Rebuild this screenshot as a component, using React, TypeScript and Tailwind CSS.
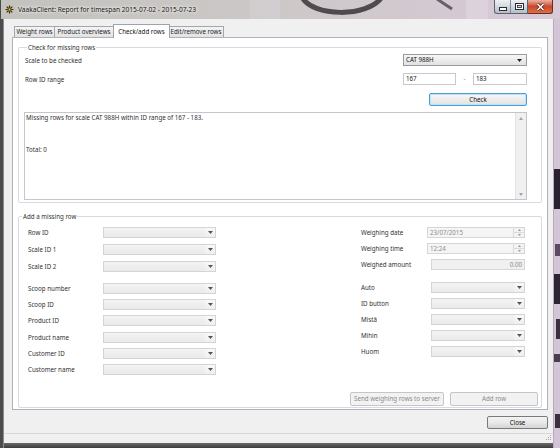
import React from "react";

const font = "font-['Noto_Sans',sans-serif]";

function Arrow({ c = "#444" }: { c?: string }) {
  return (
    <svg width="5" height="3" viewBox="0 0 5 3" className="shrink-0">
      <path d="M0 0H5L2.5 3Z" fill={c} />
    </svg>
  );
}

function DCombo({ cls }: { cls: string }) {
  return (
    <div className={`flex h-[11px] items-stretch border border-[#d4d4d4] ${cls}`}>
      <div className="flex-1 bg-linear-to-b from-[#f3f3f3] to-[#eaeaea]" />
      <div className="flex w-[10px] items-center justify-center bg-linear-to-b from-[#f8f8f8] to-[#efefef]">
        <Arrow c="#555" />
      </div>
    </div>
  );
}

function Label({ children, cls = "" }: { children: React.ReactNode; cls?: string }) {
  return <div className={`text-[6.2px] leading-[11px] text-[#303030] ${cls}`}>{children}</div>;
}

function Spin() {
  return (
    <div className="flex w-[11px] flex-col border-l border-[#dcdcdc] bg-[#f3f3f3]">
      <div className="flex flex-1 items-center justify-center border-b border-[#dcdcdc]">
        <svg width="3" height="2" viewBox="0 0 3 2"><path d="M0 2H3L1.5 0Z" fill="#9a9a9a" /></svg>
      </div>
      <div className="flex flex-1 items-center justify-center">
        <svg width="3" height="2" viewBox="0 0 3 2"><path d="M0 0H3L1.5 2Z" fill="#9a9a9a" /></svg>
      </div>
    </div>
  );
}

function DatePick({ text }: { text: string }) {
  return (
    <div className="flex h-[11px] w-[98px] border border-[#d6d6d6] bg-[#f5f5f5]">
      <div className="flex-1 pl-[2px] text-[6.2px] leading-[9px] text-[#8c8c8c]">{text}</div>
      <Spin />
    </div>
  );
}

function Tab({ cls, children, sel = false }: { cls: string; children: React.ReactNode; sel?: boolean }) {
  return sel ? (
    <div
      className={`relative z-10 -mb-px flex h-[14px] items-center justify-center border border-b-0 border-[#9ea3aa] bg-white text-[6.2px] text-[#111] ${cls}`}
    >
      {children}
    </div>
  ) : (
    <div
      className={`flex h-[11px] items-center justify-center border border-b-0 border-[#a3a7ad] bg-linear-to-b from-[#f4f4f4] to-[#e2e2e2] text-[6.2px] text-[#222] ${cls}`}
    >
      {children}
    </div>
  );
}

function TitleBar() {
  return (
    <div className="relative flex h-[19px] bg-linear-to-r from-[#c3c2bc] via-[#cdc8c8] to-[#d8cad9]">
      <svg className="absolute left-0 top-0" width="560" height="19" viewBox="0 0 560 19">
        <path d="M302 -3 C 312 17, 368 18, 382 -3" stroke="#2e2a30" strokeWidth="5" fill="none" opacity="0.8" />
        <path d="M437 -1 L 452 9" stroke="#3a3340" strokeWidth="3" opacity="0.7" />
        <rect x="466" y="0" width="22" height="19" fill="#e4dbe6" opacity="0.5" />
        <rect x="250" y="0" width="30" height="19" fill="#ddd6df" opacity="0.35" />
        <rect x="0" y="0" width="1" height="19" fill="#4b4b4b" />
      </svg>
      <div className="relative flex h-[19px] items-center pl-[5px]">
        <svg width="9" height="9" viewBox="0 0 9 9" className="mr-[4px]">
          <g stroke="#3a2a12" strokeWidth="1.2">
            <path d="M4.5 0.5V8.5M0.5 4.5H8.5M1.7 1.7L7.3 7.3M7.3 1.7L1.7 7.3" />
          </g>
          <circle cx="4.5" cy="4.5" r="2" fill="#6b4a14" />
          <circle cx="4.5" cy="4.5" r="0.9" fill="#e8c34a" />
        </svg>
        <span className="text-[6.6px] leading-[9px] text-[#161616] [text-shadow:0_0_3px_#fff,0_0_5px_#fff]">
          VaakaClient: Report for timespan 2015-07-02 - 2015-07-23
        </span>
      </div>
      <div className="flex-1" />
      <div className="relative mr-[7px] flex h-[14px]">
        <div className="flex w-[34px] rounded-bl-[3px] border border-t-0 border-[#59626e] bg-linear-to-b from-[#eef1f4] via-[#d2d9e0] to-[#b3bdc8]">
          <div className="flex w-[17px] items-center justify-center border-r border-[#7f8a96]">
            <svg width="8" height="4" viewBox="0 0 8 4" className="mt-[4px]">
              <rect x="0.5" y="0.5" width="7" height="3" fill="#fff" stroke="#2b2b2b" strokeWidth="1" />
            </svg>
          </div>
          <div className="flex w-[17px] items-center justify-center">
            <svg width="9" height="7" viewBox="0 0 9 7">
              <rect x="0.5" y="0.5" width="8" height="6" fill="none" stroke="#2b2b2b" strokeWidth="1" />
              <rect x="1.5" y="1.5" width="6" height="4" fill="none" stroke="#fff" strokeWidth="1" />
              <rect x="2.5" y="2.5" width="4" height="2" fill="none" stroke="#2b2b2b" strokeWidth="0.8" />
            </svg>
          </div>
        </div>
        <div className="flex w-[25px] items-center justify-center rounded-br-[3px] border border-l-0 border-t-0 border-[#6b2b1d] bg-linear-to-b from-[#eab0a3] via-[#c9472c] to-[#dc7048]">
          <svg width="9" height="8" viewBox="0 0 9 8">
            <path d="M1.5 1 L7.5 7 M7.5 1 L1.5 7" stroke="#5a1c10" strokeWidth="3" />
            <path d="M1.5 1 L7.5 7 M7.5 1 L1.5 7" stroke="#fff" strokeWidth="1.6" />
          </svg>
        </div>
      </div>
    </div>
  );
}

function RightGlass() {
  return (
    <svg width="7" height="429" viewBox="0 0 7 429" className="shrink-0">
      <rect x="0" y="0" width="7" height="429" fill="#d3c4d7" />
      <rect x="0" y="0" width="1" height="429" fill="#b9a9bd" />
      <rect x="1" y="150" width="6" height="40" fill="#2a2230" />
      <rect x="2" y="225" width="5" height="12" fill="#5b4a60" />
      <rect x="1" y="255" width="6" height="30" fill="#2d2432" />
      <rect x="3" y="300" width="4" height="20" fill="#3a2f3f" />
      <rect x="1" y="335" width="6" height="8" fill="#4a3d4f" />
      <rect x="2" y="395" width="5" height="14" fill="#3a2f3f" />
    </svg>
  );
}

export default function App() {
  return (
    <div className={`flex h-[448px] w-[560px] flex-col overflow-hidden bg-[#cdbfd1] ${font}`}>
      <TitleBar />
      <div className="flex h-[429px]">
        <div className="flex w-[4px] shrink-0">
          <div className="w-[3px] bg-[#4c4c4c]" />
          <div className="w-[1px] bg-[#8d8d8d]" />
        </div>
        <div className="flex w-[549px] flex-col">
          <div className="flex h-[424px] flex-col bg-[#f0f0f0]">
            <div className="flex h-[18px] items-end pl-[10px]">
              <Tab cls="w-[41px]">Weight rows</Tab>
              <Tab cls="-ml-px w-[60px]">Product overviews</Tab>
              <Tab cls="-ml-px w-[57px]" sel>
                Check/add rows
              </Tab>
              <Tab cls="-ml-[2px] w-[56px]">Edit/remove rows</Tab>
            </div>
            <div className="ml-[8px] flex h-[373px] w-[536px] flex-col border border-[#aeb2b8] bg-white">
              {/* group 1 */}
              <div className="ml-[5px] mt-[9px] flex h-[156px] w-[524px] flex-col rounded-[2px] border border-[#d5dbe0] pl-[5px] pr-[14px]">
                <div className="-mt-[5px] ml-[3px] w-fit bg-white px-[1px] text-[6.2px] leading-[9px] text-[#303030]">
                  Check for missing rows
                </div>
                <div className="mt-[2px] flex h-[12px] items-center justify-between">
                  <Label cls="pl-[1px] mt-[1px]">Scale to be checked</Label>
                  <div className="flex h-[12px] w-[124px] items-center border border-[#979a9e] bg-linear-to-b from-[#f7f7f7] to-[#e1e1e1] pl-[2px] pr-[4px]">
                    <span className="flex-1 text-[6.2px] leading-[10px] text-[#111]">CAT 988H</span>
                    <Arrow c="#222" />
                  </div>
                </div>
                <div className="mt-[7px] flex h-[12px] items-center">
                  <Label cls="pl-[1px] flex-1">Row ID range</Label>
                  <div className="h-[12px] w-[53px] border border-[#c6c9ce] bg-white pl-[2px] text-[6.2px] leading-[10px] text-[#222]">
                    167
                  </div>
                  <div className="w-[17px] text-center text-[6.2px] leading-[10px] text-[#888]">-</div>
                  <div className="h-[12px] w-[54px] border border-[#c6c9ce] bg-white pl-[2px] text-[6.2px] leading-[10px] text-[#222]">
                    183
                  </div>
                </div>
                <div className="mt-[8px] flex justify-end">
                  <div className="flex h-[13px] w-[98px] items-center justify-center rounded-[2px] border border-[#4a9fd6] bg-linear-to-b from-[#f8f8f8] to-[#e2e2e2] text-[6.2px] text-[#111] shadow-[inset_0_0_0_1px_#bfe2f6]">
                    Check
                  </div>
                </div>
                <div className="mt-[6px] flex h-[88px] border border-[#c3c7cc] bg-white">
                  <div className="flex-1 pl-[1px] text-[6.2px] leading-[8px] text-[#303030]">
                    <div className="mt-[1px]">Missing rows for scale CAT 988H within ID range of 167 - 183.</div>
                    <div className="mt-[24px]">Total: 0</div>
                  </div>
                  <div className="flex w-[11px] flex-col justify-between border-l border-[#e3e3e3] bg-[#f0f0f0]">
                    <div className="flex h-[10px] items-center justify-center">
                      <svg width="4" height="3" viewBox="0 0 4 3"><path d="M0 3H4L2 0Z" fill="#a3a3a3" /></svg>
                    </div>
                    <div className="flex h-[10px] items-center justify-center">
                      <svg width="4" height="3" viewBox="0 0 4 3"><path d="M0 0H4L2 3Z" fill="#a3a3a3" /></svg>
                    </div>
                  </div>
                </div>
              </div>
              {/* group 2 */}
              <div className="ml-[5px] mt-[13px] flex h-[192px] w-[524px] flex-col rounded-[2px] border border-[#d5dbe0] pl-[9px]">
                <div className="-ml-[6px] -mt-[5px] w-fit bg-white px-[1px] text-[6.2px] leading-[9px] text-[#303030]">
                  Add a missing row
                </div>
                <div className="mt-[6px] flex">
                  <div className="flex w-[188px] flex-col">
                    <div className="flex h-[11px] items-center">
                      <Label cls="w-[75px]">Row ID</Label>
                      <DCombo cls="w-[113px]" />
                    </div>
                    <div className="mt-[6px] flex h-[11px] items-center">
                      <Label cls="w-[75px]">Scale ID 1</Label>
                      <DCombo cls="w-[113px]" />
                    </div>
                    <div className="mt-[6px] flex h-[11px] items-center">
                      <Label cls="w-[75px]">Scale ID 2</Label>
                      <DCombo cls="w-[113px]" />
                    </div>
                    <div className="mt-[11px] flex h-[11px] items-center">
                      <Label cls="w-[75px]">Scoop number</Label>
                      <DCombo cls="w-[113px]" />
                    </div>
                    <div className="mt-[5px] flex h-[11px] items-center">
                      <Label cls="w-[75px]">Scoop ID</Label>
                      <DCombo cls="w-[113px]" />
                    </div>
                    <div className="mt-[5px] flex h-[11px] items-center">
                      <Label cls="w-[75px]">Product ID</Label>
                      <DCombo cls="w-[113px]" />
                    </div>
                    <div className="mt-[6px] flex h-[11px] items-center">
                      <Label cls="w-[75px]">Product name</Label>
                      <DCombo cls="w-[113px]" />
                    </div>
                    <div className="mt-[5px] flex h-[11px] items-center">
                      <Label cls="w-[75px]">Customer ID</Label>
                      <DCombo cls="w-[113px]" />
                    </div>
                    <div className="mt-[5px] flex h-[11px] items-center">
                      <Label cls="w-[75px]">Customer name</Label>
                      <DCombo cls="w-[113px]" />
                    </div>
                  </div>
                  <div className="ml-[145px] flex w-[164px] flex-col">
                    <div className="flex h-[11px] items-center">
                      <Label cls="flex-1">Weighing date</Label>
                      <DatePick text="23/07/2015" />
                    </div>
                    <div className="mt-[5px] flex h-[11px] items-center">
                      <Label cls="flex-1">Weighing time</Label>
                      <DatePick text="12:24" />
                    </div>
                    <div className="mt-[5px] flex h-[11px] items-center">
                      <Label cls="flex-1">Weighed amount</Label>
                      <div className="h-[11px] w-[94px] border border-[#d6d6d6] bg-[#f0f0f0] pr-[2px] text-right text-[6.2px] leading-[9px] text-[#8c8c8c]">
                        0.00
                      </div>
                    </div>
                    <div className="mt-[12px] flex h-[11px] items-center">
                      <Label cls="flex-1">Auto</Label>
                      <DCombo cls="w-[94px]" />
                    </div>
                    <div className="mt-[5px] flex h-[11px] items-center">
                      <Label cls="flex-1">ID button</Label>
                      <DCombo cls="w-[94px]" />
                    </div>
                    <div className="mt-[5px] flex h-[11px] items-center">
                      <Label cls="flex-1">Mistä</Label>
                      <DCombo cls="w-[94px]" />
                    </div>
                    <div className="mt-[5px] flex h-[11px] items-center">
                      <Label cls="flex-1">Mihin</Label>
                      <DCombo cls="w-[94px]" />
                    </div>
                    <div className="mt-[5px] flex h-[11px] items-center">
                      <Label cls="flex-1">Huom</Label>
                      <DCombo cls="w-[94px]" />
                    </div>
                  </div>
                </div>
                <div className="mb-[1px] mr-[3px] mt-auto flex justify-end gap-[6px]">
                  <div className="flex h-[14px] w-[94px] items-center justify-center rounded-[2px] border border-[#c2c5c9] bg-[#f2f2f2] text-[6.2px] text-[#8a8a8a]">
                    Send weighing rows to server
                  </div>
                  <div className="flex h-[14px] w-[88px] items-center justify-center rounded-[2px] border border-[#c2c5c9] bg-[#f2f2f2] text-[6.2px] text-[#8a8a8a]">
                    Add row
                  </div>
                </div>
              </div>
            </div>
            <div className="mt-[6px] flex justify-end pr-[5px]">
              <div className="flex h-[13px] w-[61px] items-center justify-center rounded-[2px] border border-[#7a7a7a] bg-linear-to-b from-[#f3f3f3] via-[#e9e9e9] to-[#d4d4d4] text-[6.2px] text-[#111]">
                Close
              </div>
            </div>
            <div className="mt-[4px] flex flex-1 items-end justify-end border-t border-[#d9d9d9] pb-[2px] pr-[1px]">
              <svg width="6" height="6" viewBox="0 0 6 6">
                <g fill="#a9a9a9">
                  <rect x="4" y="0" width="1" height="1" />
                  <rect x="2" y="2" width="1" height="1" />
                  <rect x="4" y="2" width="1" height="1" />
                  <rect x="0" y="4" width="1" height="1" />
                  <rect x="2" y="4" width="1" height="1" />
                  <rect x="4" y="4" width="1" height="1" />
                </g>
              </svg>
            </div>
          </div>
          <div className="h-[5px] bg-linear-to-b from-[#6a6a6a] to-[#3c3c3c]" />
        </div>
        <RightGlass />
      </div>
    </div>
  );
}
